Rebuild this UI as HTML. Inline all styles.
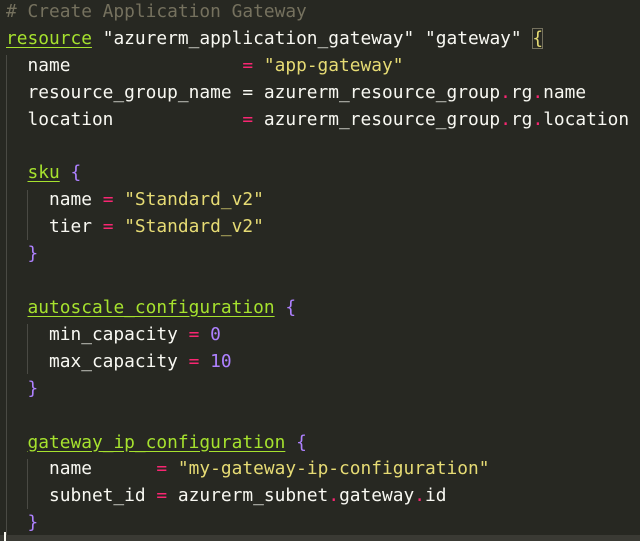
<!DOCTYPE html>
<html><head><meta charset="utf-8"><style>
html,body{margin:0;padding:0;background:#272822;width:640px;height:541px;overflow:hidden}
pre{margin:0;position:absolute;left:6px;top:-1px;font-family:"DejaVu Sans Mono","Liberation Mono",monospace;font-size:17.85px;line-height:26.9px;color:#f8f8f2}
.c{color:#75715e}.k{color:#a6e22e;text-decoration:underline;text-decoration-color:#a6e22e;text-underline-offset:3px}
.s{color:#e6db74}.o{color:#f92672}.n{color:#ae81ff}.b{color:#ae81ff}.y{color:#e6db74;outline:1px solid #75715e;outline-offset:-1px}
.g{position:absolute;width:1px;background:#4a4a44}
</style></head><body>
<div class="g" style="left:6px;top:55px;height:486px"></div>
<div class="g" style="left:27px;top:190px;height:50px"></div>
<div class="g" style="left:27px;top:324px;height:50px"></div>
<div class="g" style="left:27px;top:459px;height:50px"></div>
<div style="position:absolute;left:0;top:535px;width:640px;height:6px;background:#3a3a34"></div>
<div style="position:absolute;left:4px;top:532px;width:2px;height:9px;background:#f8f8f0"></div>
<pre><span class="c"># Create Application Gateway</span>
<span class="k">resource</span> "azurerm_application_gateway" "gateway" <span class="y">{</span>
  name                = <span class="s">"app-gateway"</span>
  resource_group_name = azurerm_resource_group<span class="o">.</span>rg<span class="o">.</span>name
  location            = azurerm_resource_group<span class="o">.</span>rg<span class="o">.</span>location

  <span class="k">sku</span> <span class="b">{</span>
    name <span class="o">=</span> <span class="s">"Standard_v2"</span>
    tier <span class="o">=</span> <span class="s">"Standard_v2"</span>
  <span class="b">}</span>

  <span class="k">autoscale_configuration</span> <span class="b">{</span>
    min_capacity <span class="o">=</span> <span class="n">0</span>
    max_capacity <span class="o">=</span> <span class="n">10</span>
  <span class="b">}</span>

  <span class="k">gateway_ip_configuration</span> <span class="b">{</span>
    name      <span class="o">=</span> <span class="s">"my-gateway-ip-configuration"</span>
    subnet_id <span class="o">=</span> azurerm_subnet<span class="o">.</span>gateway<span class="o">.</span>id
  <span class="b">}</span></pre>
<script>
document.querySelectorAll('pre').forEach(p=>{p.innerHTML=p.innerHTML.replace(/(\s) = /g,'$1 <span class="o">=</span> ');});
</script>
</body></html>
